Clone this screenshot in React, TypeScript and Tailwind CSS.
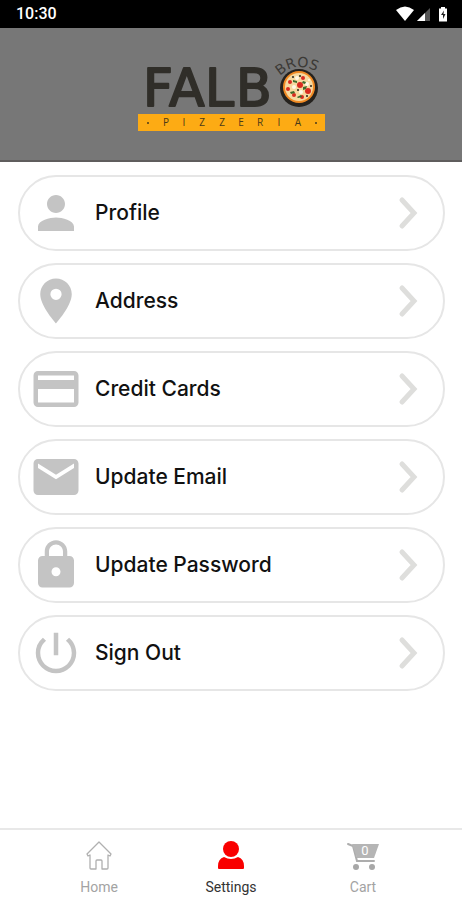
import type { ReactNode } from "react";

type Item = { label: string; icon: ReactNode };

const items: Item[] = [
  {
    label: "Profile",
    icon: (
      <path d="M12 12c2.21 0 4-1.79 4-4s-1.79-4-4-4-4 1.79-4 4 1.79 4 4 4zm0 2c-2.67 0-8 1.34-8 4v2h16v-2c0-2.66-5.33-4-8-4z" />
    ),
  },
  {
    label: "Address",
    icon: (
      <path d="M12 2C8.13 2 5 5.13 5 9c0 5.25 7 13 7 13s7-7.75 7-13c0-3.87-3.13-7-7-7zm0 9.5a2.5 2.5 0 0 1 0-5 2.5 2.5 0 0 1 0 5z" />
    ),
  },
  {
    label: "Credit Cards",
    icon: (
      <path d="M20 4H4c-1.11 0-1.99.89-1.99 2L2 18c0 1.11.89 2 2 2h16c1.11 0 2-.89 2-2V6c0-1.11-.89-2-2-2zm0 14H4v-6h16v6zm0-10H4V6h16v2z" />
    ),
  },
  {
    label: "Update Email",
    icon: (
      <path d="M20 4H4c-1.1 0-1.99.9-1.99 2L2 18c0 1.1.9 2 2 2h16c1.1 0 2-.9 2-2V6c0-1.1-.9-2-2-2zm0 4l-8 5-8-5V6l8 5 8-5v2z" />
    ),
  },
  {
    label: "Update Password",
    icon: (
      <path d="M18 8h-1V6c0-2.76-2.24-5-5-5S7 3.24 7 6v2H6c-1.1 0-2 .9-2 2v10c0 1.1.9 2 2 2h12c1.1 0 2-.9 2-2V10c0-1.1-.9-2-2-2zm-6 9c-1.1 0-2-.9-2-2s.9-2 2-2 2 .9 2 2-.9 2-2 2zm3.1-9H8.900V6c0-1.710 1.390-3.100 3.100-3.100s3.100 1.390 3.100 3.100v2z" />
    ),
  },
  {
    label: "Sign Out",
    icon: (
      <path d="M13 3h-2v10h2V3zm4.830 2.170l-1.420 1.420A6.920 6.920 0 0 1 19 12c0 3.870-3.130 7-7 7s-7-3.130-7-7c0-2.190 1.010-4.140 2.580-5.420L6.170 5.170A8.930 8.930 0 0 0 3 12a9 9 0 0 0 18 0c0-2.740-1.230-5.180-3.170-6.830z" />
    ),
  },
];

function StatusBar() {
  return (
    <div className="flex h-7 items-center justify-between bg-black pr-[14px] pl-4 text-white">
      <span className="text-base leading-5 font-medium">10:30</span>
      <svg width="52" height="16" viewBox="0 0 52 16" aria-hidden="true">
        <path d="M0 4Q9-3 18 4L9 15Z" fill="#fff" />
        <path d="M34 2v13H21Z" fill="#555" />
        <path d="M29 7v8h-8Z" fill="#fff" />
        <path d="M45 1h4v1.500h2V15.500h-8V2.500h2Z" fill="#fff" />
        <path d="M48 4.500l-3 4.500h2v4l2.500-5h-2Z" fill="#222" />
      </svg>
    </div>
  );
}

function Logo() {
  return (
    <svg width="190" height="80" viewBox="136 54 190 80" role="img" aria-label="Falbo Bros Pizzeria">
      <defs>
        <path id="bros-arc" d="M280 76Q299 58 323 76" />
      </defs>
      <text
        x="143 169 205 236"
        y="106"
        fontSize="52"
        fontFamily="DejaVu Sans, sans-serif"
        fill="#302e29"
        stroke="#302e29"
        strokeWidth="2"
        strokeLinejoin="round"
      >
        FALB
      </text>
      <text fontSize="14" fontFamily="DejaVu Sans, sans-serif" fill="#3c3a36">
        <textPath href="#bros-arc">BROS</textPath>
      </text>
      <circle cx="299" cy="88" r="19" fill="#25221e" />
      <circle cx="299" cy="87" r="16" fill="#f08a24" />
      <circle cx="299" cy="87" r="14" fill="#f6d9a0" />
      <g fill="#d92b20">
        <circle cx="290" cy="82" r="2" />
        <circle cx="300" cy="85" r="3" />
        <circle cx="308" cy="91" r="3" />
        <circle cx="294" cy="95" r="2" />
        <circle cx="303" cy="78" r="2" />
        <circle cx="302" cy="97" r="2" />
        <circle cx="288" cy="89" r="2" />
      </g>
      <g fill="#fff8e6">
        <circle cx="297" cy="78" r="2" />
        <circle cx="307" cy="84" r="2" />
        <circle cx="294" cy="87" r="2" />
        <circle cx="301" cy="92" r="2" />
        <circle cx="309" cy="80" r="1" />
      </g>
      <g fill="#3d6b2c">
        <path d="M293 80l4 1v2l-4-1zM303 87l4-1-1 3-3 1zM297 97l4-2 1 2-4 1zM290 92l4-1 1 2-4 1zM303 81l3 1-1 2-3-1z" />
      </g>
      <g fill="#25221e">
        <circle cx="300" cy="76" r="1" />
        <circle cx="293" cy="77" r="1" />
        <circle cx="311" cy="86" r="1" />
        <circle cx="298" cy="90" r="1" />
        <circle cx="307" cy="96" r="1" />
      </g>
      <rect x="138" y="114" width="187" height="17" fill="#fdab14" />
      <g fill="#4a3a18">
        <circle cx="148" cy="123" r="1" />
        <circle cx="316" cy="123" r="1" />
        <text
          x="166 184 202 222 241 260 279 298"
          y="126"
          fontSize="10"
          textAnchor="middle"
          fontFamily="Open Sans, sans-serif"
        >
          PIZZERIA
        </text>
      </g>
    </svg>
  );
}

function SettingsRow({ label, icon }: Item) {
  return (
    <li>
      <button
        type="button"
        className="flex h-[76px] w-full items-center gap-3 rounded-full border-2 border-[#e6e6e6] bg-white pr-[25px] pl-[9px] text-left"
      >
        <svg className="size-[54px] shrink-0" viewBox="0 0 24 24" fill="#c4c4c4" aria-hidden="true">
          {icon}
        </svg>
        <span className="flex-1 font-['Inter',sans-serif] text-[21px] leading-7 font-medium text-[#111]">{label}</span>
        <svg width="20" height="34" viewBox="0 0 20 34" fill="none" aria-hidden="true">
          <path d="M4 4l12 13L4 30" stroke="#dededc" strokeWidth="5" strokeLinecap="round" />
        </svg>
      </button>
    </li>
  );
}

function BottomNav() {
  return (
    <nav className="grid grid-cols-3 border-t-2 border-[#e8e8e8] px-[33px] pt-[10px] pb-[3px] text-sm leading-5 text-[#a3a3a3]">
      <a href="#home" className="flex flex-col items-center gap-[5px]">
        <svg width="28" height="32" viewBox="0 0 28 32" fill="none" stroke="#b0b0b0" aria-hidden="true">
          <path
            d="M2 14L14 2l12 12-1 2-2-1v13q0 1-1 1h-5v-8q0-1-1-1h-4q-1 0-1 1v8H6q-1 0-1-1V15l-2 1Z"
            strokeWidth="1.300"
            strokeLinejoin="round"
          />
        </svg>
        <span>Home</span>
      </a>
      <a href="#settings" aria-current="page" className="flex flex-col items-center gap-[5px] text-[#333]">
        <svg width="28" height="32" viewBox="0 0 28 32" fill="#f90000" aria-hidden="true">
          <circle cx="14" cy="9" r="8" />
          <path d="M7 17q7 4 14 0 6 2 6 9v2q0 1-1 1H2q-1 0-1-1v-2q0-7 6-9Z" />
        </svg>
        <span>Settings</span>
      </a>
      <a href="#cart" className="flex flex-col items-center gap-[5px]">
        <svg width="32" height="32" viewBox="0 0 32 32" aria-hidden="true">
          <path d="M1 4l5 2 4 15h17" fill="none" stroke="#adadad" strokeWidth="2" strokeLinecap="round" />
          <path d="M5 4h27l-5 14H10Z" fill="#b5b5b5" />
          <circle cx="9" cy="27" r="3" fill="#a8a8a8" />
          <circle cx="25" cy="27" r="3" fill="#a8a8a8" />
          <text x="18" y="15" textAnchor="middle" fontSize="13" fill="#fff">
            0
          </text>
        </svg>
        <span>Cart</span>
      </a>
    </nav>
  );
}

export default function App() {
  return (
    <div className="flex min-h-screen flex-col bg-white font-['Roboto',sans-serif]">
      <StatusBar />
      <header className="flex justify-center border-b-2 border-[#5f5d5d] bg-[#777] py-[26px]">
        <Logo />
      </header>
      <main className="flex-1 pt-[13px] pr-[17px] pb-6 pl-[18px]">
        <ul className="flex flex-col gap-3">
          {items.map((item) => (
            <SettingsRow key={item.label} {...item} />
          ))}
        </ul>
      </main>
      <BottomNav />
    </div>
  );
}
